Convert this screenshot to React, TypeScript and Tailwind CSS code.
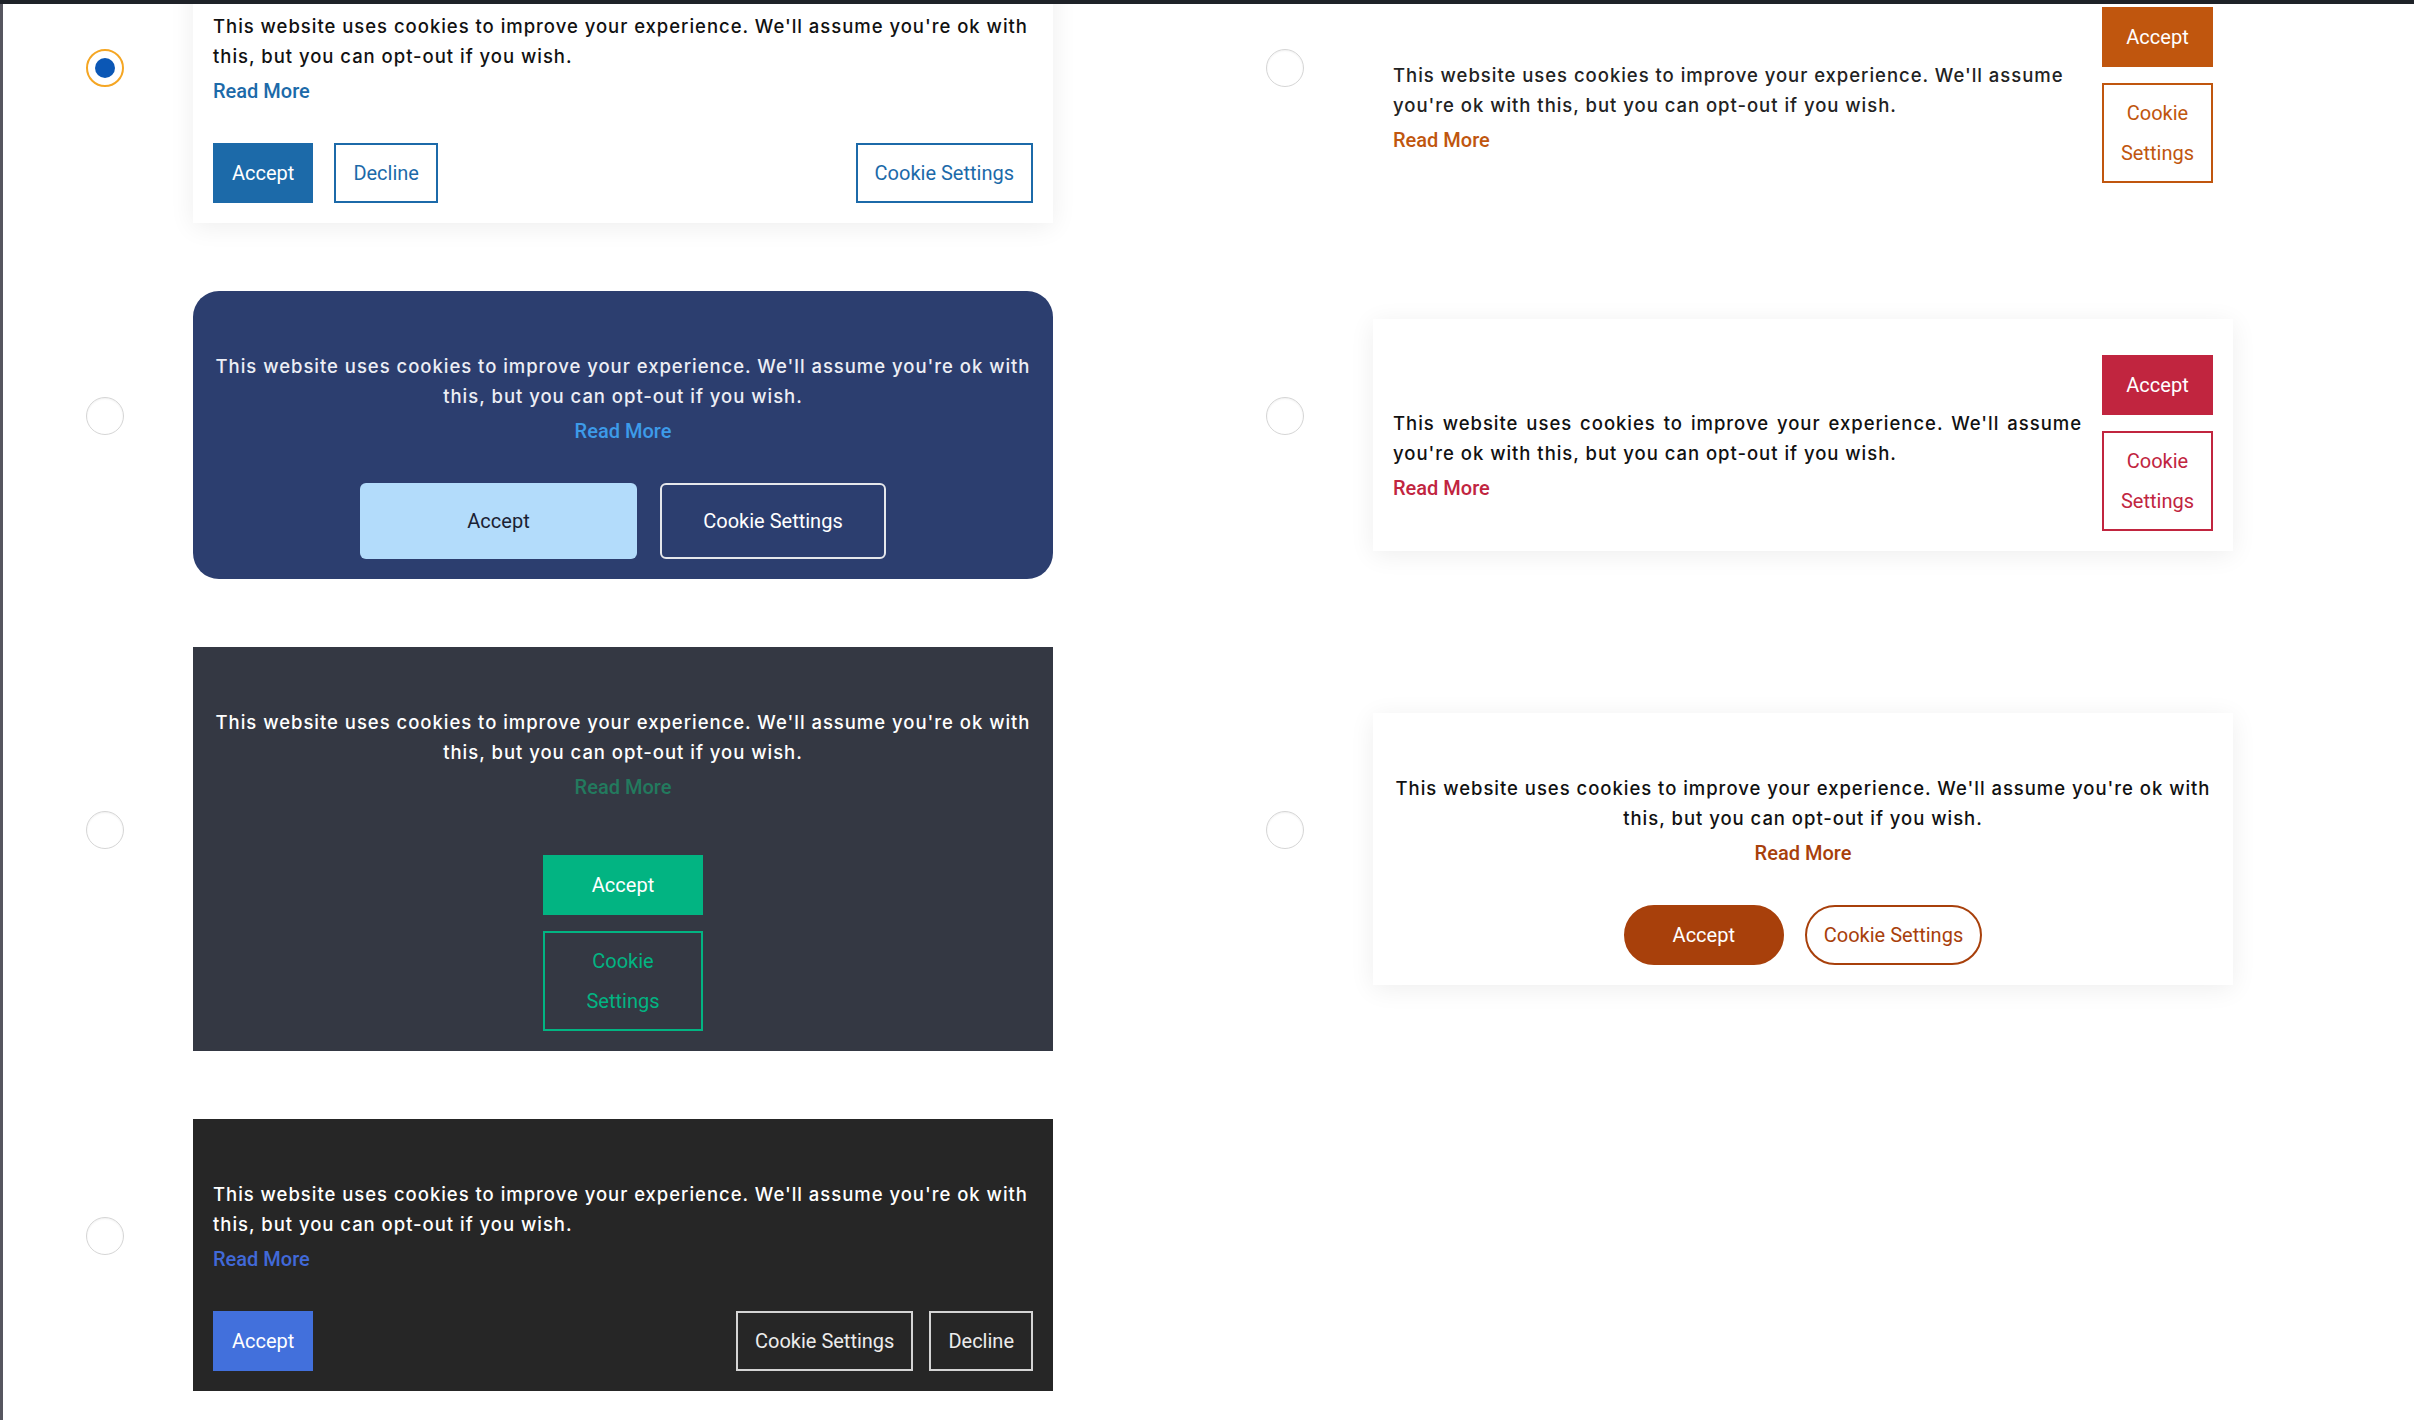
import clsx from 'clsx'

const text = "font-['Inter',sans-serif] text-[18.5px] font-medium leading-[30px] tracking-[0.97px]"
const readMore = "mt-[5px] block font-['Roboto',sans-serif] text-[20px] font-medium leading-[30px]"
const btn = "border-2 px-[17px] py-2 font-['Roboto',sans-serif] text-[20px] leading-[40px]"

const message = "This website uses cookies to improve your experience. We'll assume you're ok with this, but you can opt-out if you wish."

function Radio({ checked = false }: { checked?: boolean }) {
  if (checked) {
    return (
      <div className="mb-[38px] flex size-[38px] shrink-0 items-center justify-center rounded-full border-2 border-[#f5a623] bg-white">
        <div className="size-5 rounded-full bg-[#0b57b5]" />
      </div>
    )
  }
  return (
    <div className="mb-[38px] size-[38px] shrink-0 rounded-full border-[1.5px] border-[#d6d6d6] bg-white shadow-[inset_0_1px_2px_rgba(0,0,0,0.06)]" />
  )
}

function Option({ checked, children }: { checked?: boolean; children: React.ReactNode }) {
  return (
    <label className="flex items-center gap-[69px]">
      <Radio checked={checked} />
      {children}
    </label>
  )
}

export default function App() {
  return (
    <div className="flex h-[1420px] w-[2414px] flex-col overflow-hidden bg-white">
      <div className="h-1 shrink-0 bg-[#1e2228]" />
      <div className="flex-1 overflow-hidden border-l-[3px] border-[#56565f]">
        <div className="-mt-[53px] grid grid-cols-[967px_967px] gap-x-[213px] gap-y-[68px] pl-[83px]">
          {/* row 1 */}
          <Option checked>
            <div className="w-[860px] bg-white px-5 pt-[60px] pb-5 shadow-[0_4px_24px_rgba(0,0,0,0.07)]">
              <p className={clsx(text, 'text-[#111]')}>{message}</p>
              <a className={clsx(readMore, 'text-[#1c6aa9]')}>Read More</a>
              <div className="mt-[37px] flex items-center justify-between">
                <div className="flex gap-[21px]">
                  <button className={clsx(btn, 'border-[#1c6aa9] bg-[#1c6aa9] text-white')}>Accept</button>
                  <button className={clsx(btn, 'border-[#1c6aa9] bg-white text-[#1c6aa9]')}>Decline</button>
                </div>
                <button className={clsx(btn, 'border-[#1c6aa9] bg-white text-[#1c6aa9]')}>Cookie Settings</button>
              </div>
            </div>
          </Option>
          <Option>
            <div className="flex w-[861px] items-center gap-5 bg-white p-5">
              <div className="flex-1 pt-[40px]">
                <p className={clsx(text, 'text-[#222]')}>{message}</p>
                <a className={clsx(readMore, 'text-[#c0560e]')}>Read More</a>
              </div>
              <div className="flex w-[111px] shrink-0 flex-col gap-4 pt-4">
                <button className="border-2 border-[#c0560e] bg-[#c0560e] px-[15px] py-2 font-['Roboto',sans-serif] text-[20px] leading-[40px] text-white">Accept</button>
                <button className="border-2 border-[#c0560e] bg-white px-[15px] py-2 font-['Roboto',sans-serif] text-[20px] leading-[40px] text-[#c0560e]">Cookie Settings</button>
              </div>
            </div>
          </Option>

          {/* row 2 */}
          <Option>
            <div className="w-[860px] rounded-[26px] bg-[#2c3e6f] px-5 pt-[60px] pb-5 text-center">
              <p className={clsx(text, 'text-[#eceef5]')}>{message}</p>
              <a className={clsx(readMore, 'text-[#3d9be9]')}>Read More</a>
              <div className="mt-[37px] flex justify-center gap-[23px]">
                <button className="h-[76px] w-[277px] rounded-[6px] bg-[#b3dcfb] font-['Roboto',sans-serif] text-[20px] text-[#1a2233]">Accept</button>
                <button className="h-[76px] w-[226px] rounded-[6px] border-2 border-[#e5e7eb] font-['Roboto',sans-serif] text-[20px] text-white">Cookie Settings</button>
              </div>
            </div>
          </Option>
          <Option>
            <div className="flex w-[861px] items-center gap-5 bg-white p-5 shadow-[0_4px_24px_rgba(0,0,0,0.07)]">
              <div className="flex-1 pt-[40px]">
                <p className={clsx(text, 'text-justify text-[#111]')}>{message}</p>
                <a className={clsx(readMore, 'text-[#c1253f]')}>Read More</a>
              </div>
              <div className="flex w-[111px] shrink-0 flex-col gap-4 pt-4">
                <button className="border-2 border-[#c1253f] bg-[#c1253f] px-[15px] py-2 font-['Roboto',sans-serif] text-[20px] leading-[40px] text-white">Accept</button>
                <button className="border-2 border-[#c1253f] bg-white px-[15px] py-2 font-['Roboto',sans-serif] text-[20px] leading-[40px] text-[#c1253f]">Cookie Settings</button>
              </div>
            </div>
          </Option>

          {/* row 3 */}
          <Option>
            <div className="w-[860px] bg-[#343843] px-5 pt-[60px] pb-5 text-center">
              <p className={clsx(text, 'text-white')}>{message}</p>
              <a className={clsx(readMore, 'text-[#237a5e]')}>Read More</a>
              <div className="mt-[53px] flex flex-col items-center gap-4">
                <button className={clsx(btn, 'w-[160px] border-[#02b482] bg-[#02b482] text-white')}>Accept</button>
                <button className={clsx(btn, 'w-[160px] border-[#02b482] text-[#02b482]')}>Cookie Settings</button>
              </div>
            </div>
          </Option>
          <Option>
            <div className="w-[861px] bg-white px-5 pt-[60px] pb-5 text-center shadow-[0_4px_24px_rgba(0,0,0,0.07)]">
              <p className={clsx(text, 'text-[#111]')}>{message}</p>
              <a className={clsx(readMore, 'text-[#a8400b]')}>Read More</a>
              <div className="mt-[37px] flex justify-center gap-[21px]">
                <button className={clsx(btn, 'w-[160px] rounded-full border-[#a8400b] bg-[#a8400b] text-white')}>Accept</button>
                <button className={clsx(btn, 'rounded-full border-[#a8400b] bg-white text-[#a8400b]')}>Cookie Settings</button>
              </div>
            </div>
          </Option>

          {/* row 4 */}
          <Option>
            <div className="w-[860px] bg-[#262626] px-5 pt-[60px] pb-5">
              <p className={clsx(text, 'text-white')}>{message}</p>
              <a className={clsx(readMore, 'text-[#4169d8]')}>Read More</a>
              <div className="mt-[37px] flex items-center justify-between">
                <button className={clsx(btn, 'border-[#4270dc] bg-[#4270dc] text-white')}>Accept</button>
                <div className="flex gap-4">
                  <button className={clsx(btn, 'border-[#d4d4d4] text-[#ececec]')}>Cookie Settings</button>
                  <button className={clsx(btn, 'border-[#d4d4d4] text-[#ececec]')}>Decline</button>
                </div>
              </div>
            </div>
          </Option>
        </div>
      </div>
    </div>
  )
}
